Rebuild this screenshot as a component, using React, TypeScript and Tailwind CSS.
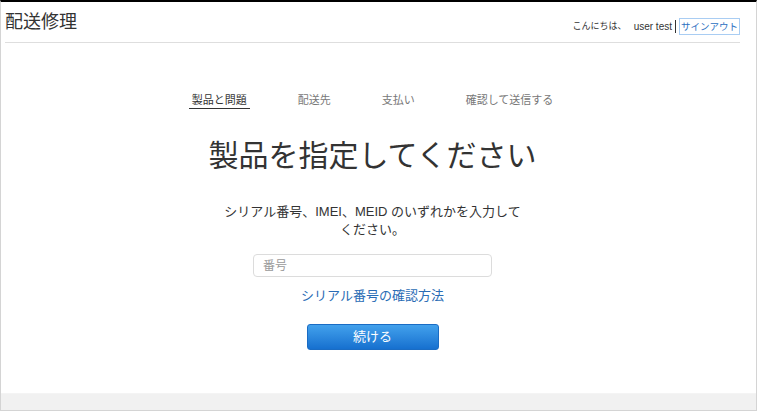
import React from 'react';

const TABS = ['製品と問題', '配送先', '支払い', '確認して送信する'];

export default function App() {
  return (
    <div
      className="flex h-[411px] w-[757px] flex-col border-x border-b border-t-2 border-x-[#d4d4d4] border-b-[#d4d4d4] border-t-black bg-white text-[#333]"
      style={{ fontFamily: '"Liberation Sans", "Noto Sans CJK JP", sans-serif' }}
    >
      {/* Header */}
      <div className="ml-[4px] flex h-[41px] w-[735px] items-start justify-between border-b border-[#dedede]">
        <h1 className="pt-[9px] text-[18px] leading-[22px] text-[#333]">配送修理</h1>
        <div className="flex items-center pt-[16px] text-[9px] leading-[15px] text-[#333]">
          <span>こんにちは、</span>
          <span className="ml-[7px] text-[10px]">user test</span>
          <span className="ml-[3px] h-[13px] w-px bg-[#333]" />
          <a
            href="#"
            className="ml-[3px] border border-[#a9cdf3] px-[1px] text-[9.5px] text-[#2b6fbf]"
          >
            サインアウト
          </a>
        </div>
      </div>

      {/* Main */}
      <div className="ml-[4px] flex w-[735px] flex-col items-center">
        <nav className="mt-[49px] flex gap-[45px] text-[11px] leading-[16px]">
          {TABS.map((tab, i) => (
            <span
              key={tab}
              className={
                i === 0
                  ? 'border-b border-[#333] px-[3px] text-[#333]'
                  : 'border-b border-transparent px-[3px] text-[#777]'
              }
            >
              {tab}
            </span>
          ))}
        </nav>

        <h2 className="mt-[27px] text-[30px] leading-[40px] text-[#333]">
          製品を指定してください
        </h2>

        <p className="mt-[27px] w-[300px] text-center text-[13px] leading-[18px] text-[#333]">
          シリアル番号、IMEI、MEID のいずれかを入力してください。
        </p>

        <input
          type="text"
          placeholder="番号"
          className="mt-[15px] h-[23px] w-[239px] rounded-[4px] border border-[#dcdcdc] px-[9px] text-[12px] text-[#333] outline-none placeholder:text-[#9a9a9a]"
        />

        <a href="#" className="mt-[10px] text-[13px] leading-[18px] text-[#2a6cb5]">
          シリアル番号の確認方法
        </a>

        <button
          type="button"
          className="mt-[19px] h-[26px] w-[132px] rounded-[3px] border border-[#1a6cc4] bg-gradient-to-b from-[#42a1ec] to-[#1670cf] text-[13px] text-white"
        >
          続ける
        </button>
      </div>

      {/* Footer */}
      <div className="mt-auto h-[17px] border-t border-[#f4f4f4] bg-[#f1f1f1]" />
    </div>
  );
}
